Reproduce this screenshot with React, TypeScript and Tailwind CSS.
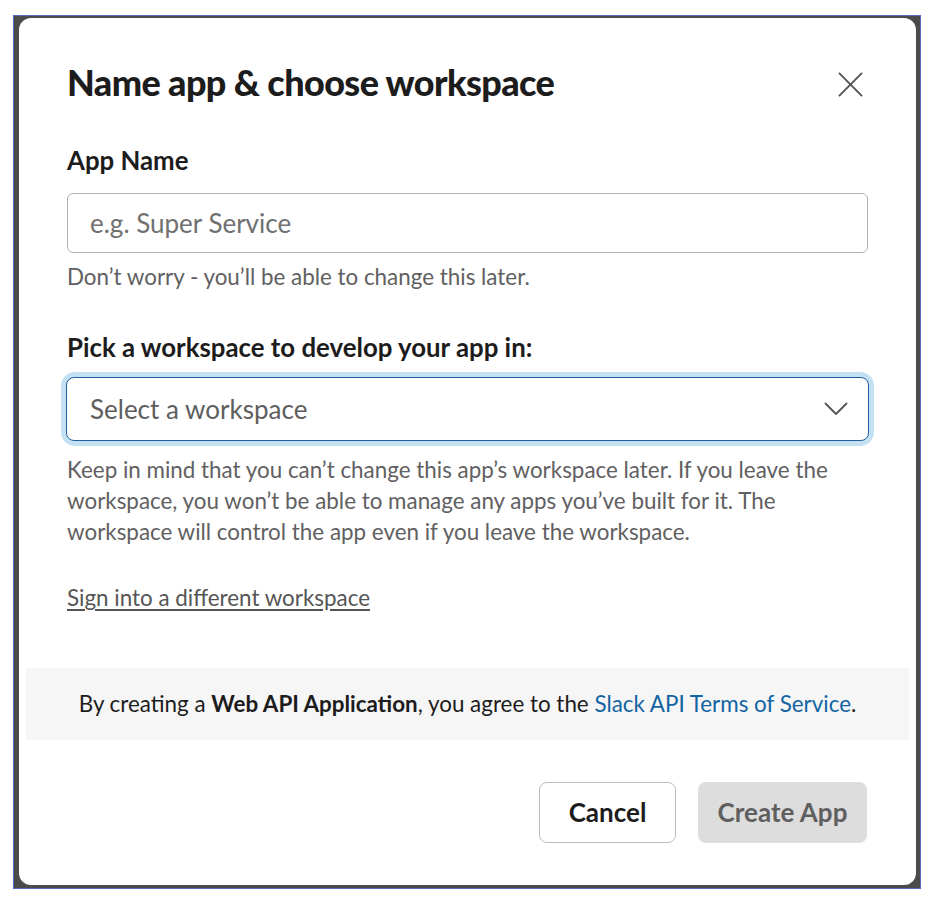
export default function App() {
  return (
    <div className="min-h-screen bg-white pt-[15px] pl-[13px]" style={{ fontFamily: "Lato, 'Noto Sans', sans-serif" }}>
      {/* overlay frame */}
      <div className="w-[908px] h-[874px] border border-[#5468c4] bg-[#4b4b4b] pt-[2px] pl-[5px] pr-[4px] pb-[3px] flex">
        {/* modal */}
        <div className="flex-1 bg-white rounded-[12px] px-[7px] pt-[42px] pb-[42px] flex flex-col">
          <div className="px-[41px]">
            {/* header */}
            <div className="flex items-center justify-between h-[44px]">
              <h1 className="text-[36px] leading-[44px] font-black tracking-[-0.6px] text-[#1d1c1d]">
                Name app &amp; choose workspace
              </h1>
              <button className="w-[36px] h-[36px] flex items-center justify-center mt-[4px]">
                <svg width="25" height="25" viewBox="0 0 26 26" fill="none" stroke="#555" strokeWidth="2" strokeLinecap="round">
                  <path d="M1.5 1.5 L24.5 24.5 M24.5 1.5 L1.5 24.5" />
                </svg>
              </button>
            </div>

            {/* app name */}
            <label className="block mt-[42px] text-[25.8px] leading-[28px] font-bold text-[#1d1c1d]">App Name</label>
            <input
              className="mt-[19px] w-full h-[60px] border border-[#b3b3b3] rounded-[6px] px-[22px] text-[26px] text-[#1d1c1d] placeholder:text-[#707070] outline-none"
              placeholder="e.g. Super Service"
            />
            <p className="mt-[10px] text-[22.4px] leading-[28px] text-[#616061]">
              Don’t worry - you’ll be able to change this later.
            </p>

            {/* workspace */}
            <label className="block mt-[42px] text-[25.8px] leading-[28px] font-bold text-[#1d1c1d]">
              Pick a workspace to develop your app in:
            </label>
            <div className="mt-[16px] -mx-[1px] rounded-[9px] ring-[5px] ring-[#c4e0f3]">
              <div className="h-[64px] border-[1.5px] border-[#1f5f9e] rounded-[8px] px-[23px] flex items-center justify-between">
                <span className="text-[26px] text-[#5e5e5e]">Select a workspace</span>
                <svg width="24" height="14" viewBox="0 0 24 14" fill="none" stroke="#555" strokeWidth="1.8" strokeLinecap="round" strokeLinejoin="round" className="mr-[-3px]">
                  <path d="M1.5 1.5 L12 12 L22.5 1.5" />
                </svg>
              </div>
            </div>
            <p className="mt-[13px] text-[22.4px] leading-[31px] text-[#616061]">
              Keep in mind that you can’t change this app’s workspace later. If you leave the workspace, you won’t be able to manage any apps you’ve built for it. The workspace will control the app even if you leave the workspace.
            </p>

            <a href="#" className="block mt-[37px] text-[22.4px] leading-[28px] text-[#555] underline underline-offset-[3px]">
              Sign into a different workspace
            </a>
          </div>

          {/* terms band */}
          <div className="mt-[56px] h-[72px] bg-[#f6f6f6] flex items-center justify-center text-[22.4px] text-[#1d1c1d]">
            <span>
              By creating a <b className="font-bold">Web API Application</b>, you agree to the{" "}
              <a href="#" className="text-[#1264a3]">Slack API Terms of Service</a>.
            </span>
          </div>

          {/* actions */}
          <div className="mt-[42px] pl-[41px] pr-[42px] flex justify-end gap-[22px]">
            <button className="h-[61px] w-[137px] border border-[#bdbdbd] rounded-[8px] text-[26px] font-bold text-[#1d1c1d]">
              Cancel
            </button>
            <button className="h-[61px] w-[169px] bg-[#dddddd] rounded-[8px] text-[26px] font-bold text-[#5f5f5f]">
              Create App
            </button>
          </div>
        </div>
      </div>
    </div>
  );
}
